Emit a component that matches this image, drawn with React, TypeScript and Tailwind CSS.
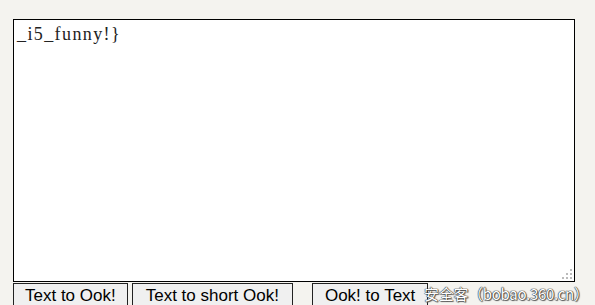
export default function App() {
  return (
    <div className="relative h-[305px] w-[595px] overflow-hidden bg-[#f4f3ef]">
      <div className="pl-[13px] pt-[19px]">
        <div className="relative w-[562px]">
          <textarea
            readOnly
            defaultValue="_i5_funny!}"
            className="block h-[263px] w-[562px] resize-none border border-black bg-white px-[3px] pt-[2px] text-[18px] leading-[24px] tracking-[1.4px] text-[#222] outline-none"
            style={{ fontFamily: '"Liberation Serif", "Noto Sans CJK SC", serif' }}
          />
          {/* resize grip */}
          <div className="pointer-events-none absolute bottom-[3px] right-[3px] grid grid-cols-3 gap-[2px]">
            <span className="h-[2px] w-[2px]" />
            <span className="h-[2px] w-[2px]" />
            <span className="h-[2px] w-[2px] bg-[#bbb]" />
            <span className="h-[2px] w-[2px]" />
            <span className="h-[2px] w-[2px] bg-[#bbb]" />
            <span className="h-[2px] w-[2px] bg-[#bbb]" />
            <span className="h-[2px] w-[2px] bg-[#bbb]" />
            <span className="h-[2px] w-[2px] bg-[#bbb]" />
            <span className="h-[2px] w-[2px] bg-[#bbb]" />
          </div>
        </div>
        <div
          className="mt-[1px] flex items-start text-[17px] text-black"
          style={{ fontFamily: '"Liberation Sans", Arial, sans-serif' }}
        >
          <button className="h-[26px] border border-[#222] bg-[#f0f0f0] px-[11px] leading-[24px]">Text to Ook!</button>
          <button className="ml-[4px] h-[26px] border border-[#222] bg-[#f0f0f0] px-[13px] leading-[24px]">Text to short Ook!</button>
          <button className="ml-[19px] h-[26px] border border-[#222] bg-[#f0f0f0] px-[12px] leading-[24px]">Ook! to Text</button>
        </div>
      </div>
      <div
        className="absolute left-[424px] top-[285px] text-[15px] leading-[18px] tracking-[-0.3px] text-white [text-shadow:0_0_1px_#333,0_0_1px_#333,0_0_1px_#333,1px_1px_1px_#666]"
        style={{ fontFamily: '"Noto Sans CJK SC", "Liberation Sans", sans-serif' }}
      >
        安全客（bobao.360.cn）
      </div>
    </div>
  );
}
